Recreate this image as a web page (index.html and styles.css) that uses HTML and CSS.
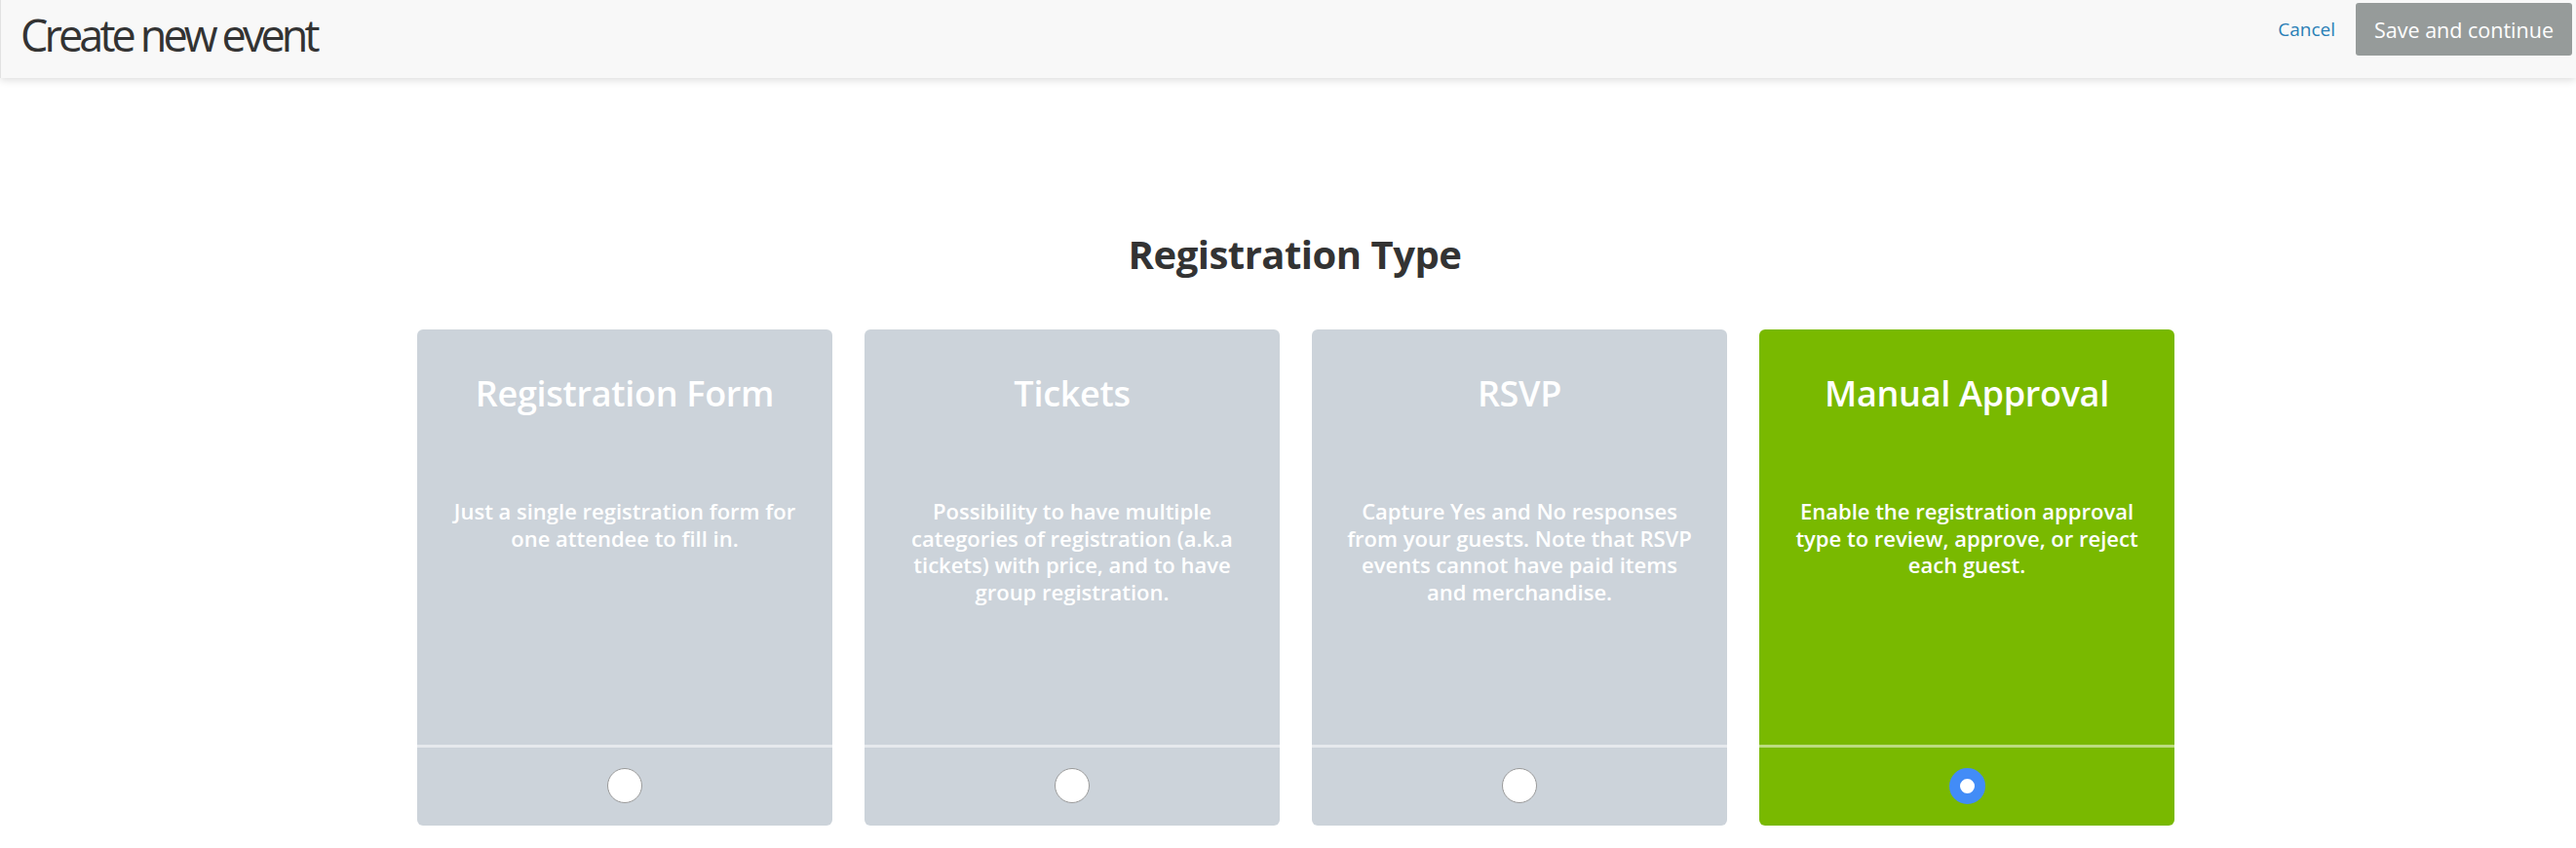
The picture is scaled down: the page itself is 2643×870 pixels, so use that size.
FILE: index.html
```html
<!DOCTYPE html>
<html lang="en">
<head>
<meta charset="utf-8">
<title>Create new event</title>
<link rel="stylesheet" href="styles.css">
</head>
<body>
<header class="topbar">
  <h1 class="page-title">Create new event</h1>
  <div class="actions">
    <a class="cancel" href="#">Cancel</a>
    <button class="save" type="button">Save and continue</button>
  </div>
</header>
<main class="content">
  <h2 class="section-title">Registration Type</h2>
  <div class="cards">
    <div class="card">
      <div class="card-body">
        <h3 class="card-title">Registration Form</h3>
        <p class="card-text">Just a single registration form for<br>one attendee to fill in.</p>
      </div>
      <div class="card-foot"><span class="radio"></span></div>
    </div>
    <div class="card">
      <div class="card-body">
        <h3 class="card-title">Tickets</h3>
        <p class="card-text">Possibility to have multiple<br>categories of registration (a.k.a<br>tickets) with price, and to have<br>group registration.</p>
      </div>
      <div class="card-foot"><span class="radio"></span></div>
    </div>
    <div class="card">
      <div class="card-body">
        <h3 class="card-title">RSVP</h3>
        <p class="card-text">Capture Yes and No responses<br>from your guests. Note that RSVP<br>events cannot have paid items<br>and merchandise.</p>
      </div>
      <div class="card-foot"><span class="radio"></span></div>
    </div>
    <div class="card card-selected">
      <div class="card-body">
        <h3 class="card-title">Manual Approval</h3>
        <p class="card-text">Enable the registration approval<br>type to review, approve, or reject<br>each guest.</p>
      </div>
      <div class="card-foot"><span class="radio radio-on"></span></div>
    </div>
  </div>
</main>
</body>
</html>
```

FILE: styles.css
```css
* { box-sizing: border-box; }
html, body { margin: 0; padding: 0; background: #ffffff; }
body {
  font-family: "Open Sans", "Liberation Sans", sans-serif;
  color: #333333;
}
.topbar {
  height: 80px;
  background: #f8f8f8;
  box-shadow: 0 2px 8px rgba(0, 0, 0, 0.14);
  display: flex;
  align-items: center;
  justify-content: space-between;
  padding: 0 4px 0 20px;
  border-left: 1px solid #e2e2e2;
}
.page-title {
  margin: 0;
  font-size: 45px;
  font-weight: 400;
  letter-spacing: -3.9px;
  color: #333333;
  line-height: 1;
  position: relative;
  top: -5px;
}
.actions {
  display: flex;
  align-items: center;
  gap: 21px;
  align-self: flex-start;
  padding-top: 3px;
}
.cancel {
  font-size: 19px;
  color: #2a7fb6;
  text-decoration: none;
}
.save {
  font-family: inherit;
  font-size: 21.5px;
  color: #ffffff;
  background: #969b9a;
  border: 0;
  border-radius: 3px;
  height: 54px;
  padding: 0 19px 0 19px;
  cursor: pointer;
}
.content {
  padding-top: 155px;
}
.section-title {
  margin: 0 0 51px 0;
  text-align: center;
  font-size: 40px;
  font-weight: 700;
  line-height: 52px;
  letter-spacing: -0.5px;
  color: #333333;
  padding-left: 14px;
}
.cards {
  display: grid;
  grid-template-columns: repeat(4, 426px);
  gap: 33px;
  margin-left: 428px;
}
.card {
  background: #ccd3da;
  border-radius: 6px;
  height: 509px;
  display: flex;
  flex-direction: column;
  color: #ffffff;
  overflow: hidden;
}
.card-selected {
  background: #79b900;
}
.card-body {
  flex: 1;
  padding: 36px 16px 0;
  text-align: center;
}
.card-title {
  margin: 0;
  font-size: 36px;
  font-weight: 600;
  line-height: 60px;
  letter-spacing: -0.3px;
}
.card-text {
  margin: 77px 0 0 0;
  font-size: 22px;
  font-weight: 600;
  line-height: 27.5px;
  white-space: nowrap;
}
.card-foot {
  height: 83px;
  border-top: 3px solid rgba(255, 255, 255, 0.5);
  display: flex;
  align-items: center;
  justify-content: center;
  padding-bottom: 2px;
}
.radio {
  width: 36px;
  height: 36px;
  border-radius: 50%;
  background: #ffffff;
  border: 1px solid #9a9a9a;
}
.radio-on {
  width: 37px;
  height: 37px;
  border: 11px solid #428cf7;
  background: #ffffff;
}
```
